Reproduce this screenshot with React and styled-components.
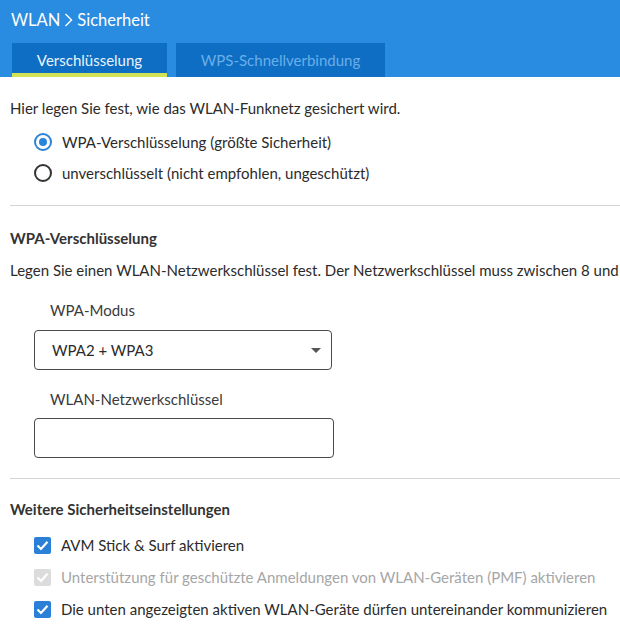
import React from 'react';
import styled, { createGlobalStyle } from 'styled-components';

const GlobalStyle = createGlobalStyle`
  html, body {
    margin: 0;
    padding: 0;
    background: #fff;
    overflow: hidden;
  }
  body {
    font-family: Lato, "Open Sans", sans-serif;
    font-size: 15px;
    color: #2b2b2b;
  }
`;

const Page = styled.div`
  width: 620px;
  height: 631px;
  overflow: hidden;
`;

const Header = styled.header`
  background: #2a8ce0;
  padding: 9px 0 0 12px;
  height: 68px;
  display: flex;
  flex-direction: column;
`;

const Title = styled.h1`
  margin: 0 0 0 -1px;
  font-size: 16.5px;
  font-weight: 400;
  color: #fff;
  display: flex;
  align-items: center;
  gap: 4px;
  height: 22px;
`;

const Tabs = styled.nav`
  display: flex;
  gap: 9px;
  margin-top: 12px;
`;

const Tab = styled.div`
  height: 34px;
  width: ${({ w }) => w}px;
  background: #0d6ec4;
  color: ${({ active }) => (active ? '#eaf3fc' : '#6aaee8')};
  box-sizing: border-box;
  border-bottom: 4px solid ${({ active }) => (active ? '#d2e256' : 'transparent')};
  display: flex;
  align-items: center;
  justify-content: center;
  padding-top: 3px;
  font-size: 15px;
`;

const Content = styled.main`
  padding: 0 0 0 10px;
`;

const Text = styled.p`
  margin: 0;
  padding-top: ${({ top }) => top || 0}px;
  white-space: nowrap;
  line-height: 20px;
`;

const OptionList = styled.div`
  display: flex;
  flex-direction: column;
  gap: ${({ gap }) => gap}px;
  padding: ${({ top }) => top}px 0 0 24px;
`;

const Option = styled.label`
  display: flex;
  align-items: center;
  gap: 10px;
  height: 20px;
  white-space: nowrap;
  color: ${({ disabled }) => (disabled ? '#a6a6a6' : '#2b2b2b')};
`;

const Radio = styled.span`
  width: 18px;
  height: 18px;
  box-sizing: border-box;
  border-radius: 50%;
  border: 2px solid ${({ checked }) => (checked ? '#2a84d8' : '#333')};
  display: flex;
  align-items: center;
  justify-content: center;
  &::after {
    content: '';
    width: 8px;
    height: 8px;
    border-radius: 50%;
    background: ${({ checked }) => (checked ? '#2a84d8' : 'transparent')};
  }
`;

const Check = styled.span`
  width: 17px;
  height: 17px;
  border-radius: 2px;
  background: ${({ disabled }) => (disabled ? '#dcdcdc' : '#2a7fd6')};
  display: flex;
  align-items: center;
  justify-content: center;
`;

const Divider = styled.hr`
  border: 0;
  border-top: 1px solid #d4d4d4;
  margin: ${({ top }) => top}px 0 0 0;
`;

const Heading = styled.h2`
  margin: 0;
  padding-top: ${({ top }) => top}px;
  font-size: 15px;
  font-weight: 700;
  line-height: 20px;
  color: #333;
`;

const Field = styled.div`
  padding: ${({ top }) => top}px 0 0 24px;
  display: flex;
  flex-direction: column;
`;

const FieldLabel = styled.div`
  padding-left: 16px;
  line-height: 20px;
  margin-bottom: ${({ gap }) => gap}px;
  color: #3a3a3a;
`;

const Box = styled.div`
  width: ${({ w }) => w}px;
  height: 40px;
  box-sizing: border-box;
  border: 1px solid #4a4a4a;
  border-radius: 4px;
  display: flex;
  align-items: center;
  justify-content: space-between;
  padding: 0 10px 0 17px;
  color: #2b2b2b;
`;

const Caret = styled.span`
  width: 0;
  height: 0;
  border-left: 5px solid transparent;
  border-right: 5px solid transparent;
  border-top: 5px solid #555;
`;

const Tick = () => (
  <svg width="13" height="11" viewBox="0 0 13 11">
    <path d="M1.5 5.5 L5 9 L11.5 1.8" fill="none" stroke="#fff" strokeWidth="2.2" />
  </svg>
);

const Chevron = () => (
  <svg width="9" height="16" viewBox="0 0 9 16">
    <path d="M1.5 2 L7.5 8 L1.5 14" fill="none" stroke="#fff" strokeWidth="1.4" />
  </svg>
);

export default function App() {
  return (
    <Page>
      <GlobalStyle />
      <Header>
        <Title>WLAN <Chevron /> Sicherheit</Title>
        <Tabs>
          <Tab active w={155}>Verschlüsselung</Tab>
          <Tab w={209}>WPS-Schnellverbindung</Tab>
        </Tabs>
      </Header>
      <Content>
        <Text top={21}>Hier legen Sie fest, wie das WLAN-Funknetz gesichert wird.</Text>
        <OptionList top={14} gap={11}>
          <Option><Radio checked />WPA-Verschlüsselung (größte Sicherheit)</Option>
          <Option><Radio />unverschlüsselt (nicht empfohlen, ungeschützt)</Option>
        </OptionList>
        <Divider top={22} />
        <Heading top={22}>WPA-Verschlüsselung</Heading>
        <Text top={12}>
          Legen Sie einen WLAN-Netzwerkschlüssel fest. Der Netzwerkschlüssel muss zwischen 8 und 63 Zeichen lang sein.
        </Text>
        <Field top={20}>
          <FieldLabel gap={10}>WPA-Modus</FieldLabel>
          <Box w={298}>WPA2 + WPA3<Caret /></Box>
        </Field>
        <Field top={19}>
          <FieldLabel gap={9}>WLAN-Netzwerkschlüssel</FieldLabel>
          <Box w={300} />
        </Field>
        <Divider top={20} />
        <Heading top={20}>Weitere Sicherheitseinstellungen</Heading>
        <OptionList top={16} gap={12}>
          <Option><Check><Tick /></Check>AVM Stick &amp; Surf aktivieren</Option>
          <Option disabled><Check disabled><Tick /></Check>Unterstützung für geschützte Anmeldungen von WLAN-Geräten (PMF) aktivieren</Option>
          <Option><Check><Tick /></Check>Die unten angezeigten aktiven WLAN-Geräte dürfen untereinander kommunizieren</Option>
        </OptionList>
      </Content>
    </Page>
  );
}
